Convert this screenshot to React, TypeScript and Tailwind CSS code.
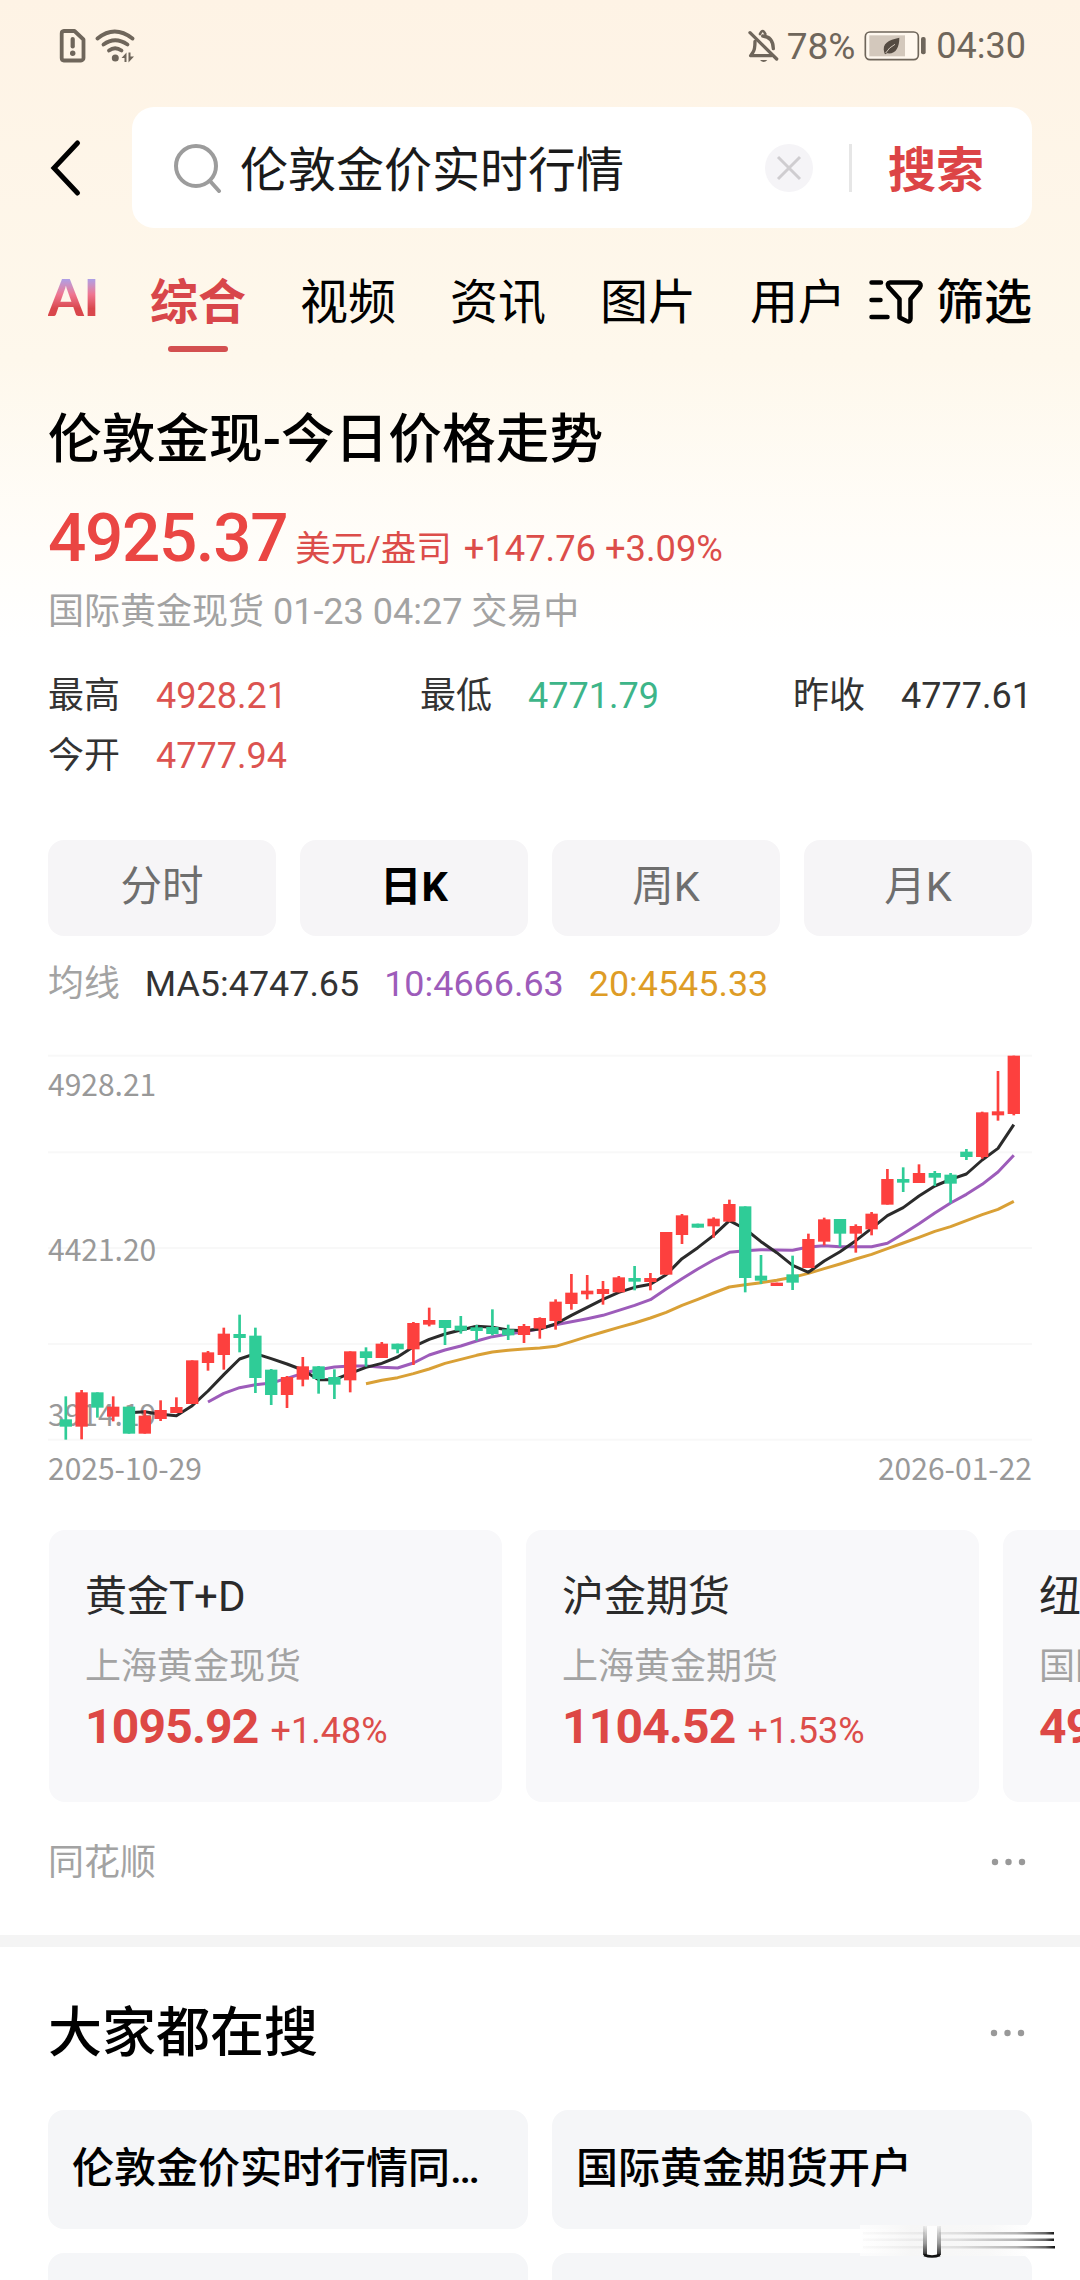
import { clsx } from "clsx";

const FONT = "font-[Roboto,'Noto_Sans_CJK_SC',sans-serif]";
const FONT_CJK = "font-['Noto_Sans_CJK_SC',sans-serif]";

type Candle = [up: 0 | 1, high: number, top: number, bottom: number, low: number];

const CANDLES: Candle[] = [
  [0, 1099, 1168, 1190, 1229],
  [1, 1080, 1087, 1190, 1228],
  [0, 1087, 1087, 1133, 1163],
  [1, 1099, 1130, 1160, 1174],
  [0, 1130, 1130, 1211, 1211],
  [1, 1140, 1157, 1211, 1211],
  [1, 1111, 1140, 1167, 1173],
  [1, 1102, 1131, 1149, 1149],
  [1, 991, 991, 1122, 1122],
  [1, 963, 967, 999, 1022],
  [1, 893, 911, 975, 1019],
  [0, 854, 912, 924, 967],
  [0, 893, 917, 1044, 1089],
  [0, 1017, 1019, 1095, 1125],
  [1, 1038, 1041, 1095, 1134],
  [1, 981, 1009, 1049, 1069],
  [0, 1008, 1009, 1047, 1091],
  [0, 1018, 1041, 1064, 1107],
  [1, 964, 964, 1051, 1087],
  [0, 952, 964, 984, 1010],
  [1, 936, 941, 984, 984],
  [0, 941, 941, 958, 970],
  [1, 876, 879, 958, 1005],
  [1, 833, 870, 884, 889],
  [0, 870, 870, 894, 945],
  [0, 858, 887, 902, 911],
  [0, 885, 892, 903, 932],
  [0, 838, 891, 912, 916],
  [0, 884, 898, 916, 930],
  [1, 882, 888, 915, 939],
  [1, 862, 864, 896, 926],
  [1, 808, 815, 873, 899],
  [1, 732, 788, 822, 839],
  [1, 735, 782, 793, 808],
  [1, 753, 777, 792, 824],
  [1, 738, 742, 787, 787],
  [0, 708, 744, 755, 781],
  [1, 729, 744, 756, 781],
  [1, 606, 606, 734, 734],
  [1, 552, 556, 615, 642],
  [0, 581, 581, 593, 593],
  [1, 562, 566, 589, 623],
  [1, 509, 522, 575, 575],
  [0, 529, 529, 744, 787],
  [0, 675, 737, 752, 762],
  [1, 758, 758, 768, 768],
  [0, 677, 733, 758, 780],
  [1, 611, 627, 714, 714],
  [1, 563, 568, 635, 646],
  [0, 567, 567, 611, 650],
  [1, 583, 588, 611, 668],
  [1, 546, 551, 598, 616],
  [1, 417, 447, 524, 524],
  [0, 412, 447, 458, 486],
  [1, 403, 429, 459, 459],
  [0, 423, 429, 443, 468],
  [0, 429, 434, 461, 520],
  [0, 357, 365, 381, 390],
  [1, 245, 247, 381, 386],
  [1, 123, 244, 256, 272],
  [1, 77, 77, 252, 256],
];

const MA5 = [
  1148, 1145, 1153, 1157, 1127, 1083, 1034, 987, 971, 986, 1002, 1020, 1049, 1049, 1030, 1012, 1000,
  981, 950, 928, 912, 900, 889, 892, 900, 902, 897, 882, 856, 832, 808, 787, 772, 763, 734, 686, 653,
  616, 572, 597, 635, 668, 706, 727, 693, 665, 632, 595, 557, 533, 498, 468, 448, 432, 390, 355, 284,
];

const MA10 = [
  1116, 1090, 1073, 1064, 1059, 1045, 1030, 1019, 1011, 1008, 1008, 1012, 1014, 999, 975, 960, 948,
  933, 920, 912, 905, 896, 884, 875, 866, 856, 841, 826, 809, 777, 746, 717, 690, 667, 662, 659, 660,
  661, 651, 647, 650, 650, 650, 640, 611, 581, 549, 519, 493, 463, 426, 376,
];

const MA20 = [
  1061, 1051, 1043, 1031, 1017, 1000, 988, 976, 966, 961, 957, 954, 949, 935, 920, 906, 892, 879, 864,
  847, 826, 808, 789, 771, 764, 758, 751, 742, 730, 716, 702, 687, 673, 656, 639, 622, 604, 590, 572,
  554, 538, 514,
];

const GRID = [77, 367, 654, 942, 1229];

const candleX = (i: number) => 53.4 + 47.4 * i;

// every average ends on the last candle
function linePoints(values: number[]) {
  const start = CANDLES.length - values.length;
  return values.map((y, i) => `${candleX(start + i)},${y}`).join(" ");
}

function KLineChart() {
  return (
    <div className="relative h-[400px]">
      <svg className="absolute inset-0 h-full w-full" viewBox="0 60 2952 1200">
        {GRID.map((y) => (
          <line key={y} x1="0" x2="2952" y1={y} y2={y} stroke="#f8f8f8" strokeWidth="6" />
        ))}
      </svg>
      <div
        className={clsx(
          "absolute inset-0 flex flex-col pt-[11px] text-[30px] leading-[44px] text-[#999]",
          FONT_CJK
        )}
      >
        <span className="mb-[121px]">4928.21</span>
        <span className="mb-[121px]">4421.20</span>
        <span>3914.19</span>
      </div>
      <svg className="absolute inset-0 h-full w-full" viewBox="0 60 2952 1200">
        <g fill="none" strokeWidth="9" strokeLinejoin="round">
          <polyline points={linePoints(MA20)} stroke="#d9a036" />
          <polyline points={linePoints(MA10)} stroke="#9d5cba" />
          <polyline points={linePoints(MA5)} stroke="#2b2b2b" />
        </g>
        {CANDLES.map(([up, high, top, bottom, low], i) => (
          <g key={i} fill={up ? "#fd403e" : "#2fcc97"}>
            <rect x={candleX(i) - 4} y={high} width="8" height={low - high} />
            <rect x={candleX(i) - 18.5} y={top} width="37" height={bottom - top} />
          </g>
        ))}
      </svg>
    </div>
  );
}

function StatusBar() {
  return (
    <div className="flex h-[92px] items-center justify-between pl-[58px] pr-[54px] text-[#6f665b]">
      <div className="flex items-center gap-[7px]">
        <svg width="30" height="36" viewBox="0 0 30 36" fill="none" stroke="currentColor" strokeWidth="3.8" strokeLinejoin="round">
          <path d="M6 3h10.500l9 8.500V30a2.500 2.500 0 0 1-2.500 2.500H6A2.500 2.500 0 0 1 3.700 30V5.500A2.500 2.500 0 0 1 6 3z" />
          <path d="M14.700 11v7.500" strokeLinecap="round" strokeWidth="4.200" />
          <circle cx="14.700" cy="25.200" r="2.700" fill="currentColor" stroke="none" />
        </svg>
        <svg width="42" height="36" viewBox="0 0 42 36" fill="none" stroke="currentColor" strokeWidth="3.800" strokeLinecap="round">
          <path d="M2.500 10.500Q19.500 -3.500 37.500 10.500" />
          <path d="M8.500 16.500Q20 8 32.500 16.500" />
          <path d="M14 22.500Q20 18 26.500 22.500" />
          <circle cx="20.300" cy="30" r="3.500" fill="currentColor" stroke="none" />
          <path d="M26.500 30l5-5.500v9.500h-2v-4zM33.500 24.500h2v4H39l-5.500 6z" fill="currentColor" stroke="none" />
        </svg>
      </div>
      <div className="flex items-center">
        <svg width="32" height="36" viewBox="36 54 96 108" fill="none" stroke="currentColor" strokeWidth="10" strokeLinecap="round">
          <path d="M57 94C57 112 56 120 51 127L44 137H106" strokeLinejoin="round" />
          <path d="M80 78Q111 80 112 116" />
          <path d="M72 72Q80 54 88 72" strokeWidth="8" />
          <path d="M42 68L122 147" />
          <path d="M72 150H94Q83 162 72 150z" fill="currentColor" stroke="none" />
        </svg>
        <span className="ml-[7px] text-[37px] leading-none">78%</span>
        <svg className="ml-[9px]" width="63" height="32" viewBox="375 60 189 96">
          <rect x="379" y="66" width="159" height="83" rx="14" fill="#fff8ef" stroke="currentColor" strokeWidth="5" />
          <rect x="391" y="76" width="107" height="63" fill="#d3c8bc" />
          <path d="M481 83C481 112 470 134 444 130L438 133L436 128C428 100 448 90 481 83z" fill="#544b42" />
          <path d="M440 129Q450 112 468 103" fill="none" stroke="#d3c8bc" strokeWidth="3" />
          <rect x="546" y="81" width="14" height="52" rx="6" fill="currentColor" />
        </svg>
        <span className="ml-[9px] text-[36px] leading-none">04:30</span>
      </div>
    </div>
  );
}

function SearchBar() {
  return (
    <div className="mt-[15px] flex h-[121px] items-center">
      <svg className="ml-[48px]" width="84" height="60" viewBox="0 0 84 60" fill="none" stroke="#000" strokeWidth="5" strokeLinecap="round">
        <path d="M29.500 5L6 30l23.500 25" />
      </svg>
      <div className="flex h-full w-[900px] items-center rounded-[22px] bg-white">
        <svg className="ml-[41px]" width="50" height="50" viewBox="0 0 50 50" fill="none" stroke="#9c9c9c" strokeWidth="4" strokeLinecap="round">
          <circle cx="23" cy="23" r="20" />
          <path d="M37 38l9 10" />
        </svg>
        <span className={clsx("mb-[3px] ml-[17px] text-[48px] leading-none text-[#1a1a1a]", FONT_CJK)}>
          伦敦金价实时行情
        </span>
        <svg className="ml-[141px]" width="48" height="48" viewBox="0 0 48 48">
          <circle cx="24" cy="24" r="24" fill="#f5f4f7" />
          <path d="M13 13l22 22M35 13L13 35" stroke="#cfcdd0" strokeWidth="3" />
        </svg>
        <div className="ml-[36px] h-[48px] w-[3px] bg-[#e6e6e6]" />
        <span className={clsx("mb-[4px] ml-[36px] text-[48px] font-bold leading-none text-[#dc4446]", FONT_CJK)}>
          搜索
        </span>
      </div>
    </div>
  );
}

function Tabs() {
  return (
    <div className={clsx("flex h-[146px] whitespace-nowrap px-[48px] pt-[35px] text-[48px] leading-[70px]", FONT_CJK)}>
      <span className="h-[70px] w-[102px] shrink-0 bg-gradient-to-b from-[#a9a0ea] from-22% via-[#ef7590] via-45% to-[#d9474c] to-65% bg-clip-text font-[Lato,sans-serif] text-[51px] font-black leading-[68px] text-transparent">
        AI
      </span>
      <div className="flex w-[96px] shrink-0 flex-col items-center font-bold text-[#d8464a]">
        <span>综合</span>
        <span className="mt-[13px] h-[6px] w-[60px] rounded-full bg-[#d35050]" />
      </div>
      <div className="ml-[54px] flex gap-[54px] text-black">
        {["视频", "资讯", "图片", "用户"].map((tab) => (
          <span key={tab}>{tab}</span>
        ))}
      </div>
      <svg className="ml-[21px] mt-[15px] shrink-0" width="58" height="48" viewBox="0 0 58 48" fill="none" stroke="#000" strokeWidth="4.500" strokeLinecap="round" strokeLinejoin="round">
        <path d="M4.500 4.500h9.500M4.500 22h9M4.500 39h16" />
        <path d="M23 4.500h28q4 1 2 5L43.500 21v19.500q0 4-4 2.500l-7-3.500V21L21.500 9q-2-4 1.500-4.500z" />
      </svg>
      <span className="ml-[11px] font-medium text-black">筛选</span>
    </div>
  );
}

const STATS = [
  { label: "最高", value: "4928.21", color: "text-[#dc5350]" },
  { label: "最低", value: "4771.79", color: "text-[#3db589]" },
  { label: "昨收", value: "4777.61", color: "text-[#333]" },
  { label: "今开", value: "4777.94", color: "text-[#dc5350]" },
];

const PERIODS = ["分时", "日K", "周K", "月K"];

const PRODUCTS = [
  { name: "黄金T+D", market: "上海黄金现货", price: "1095.92", change: "+1.48%" },
  { name: "沪金期货", market: "上海黄金期货", price: "1104.52", change: "+1.53%" },
  { name: "纽约金", market: "国际黄金期货", price: "4936.30", change: "+3.08%" },
];

function More() {
  return (
    <svg width="42" height="12" viewBox="0 0 42 12" fill="#999">
      <circle cx="4" cy="5" r="3.200" />
      <circle cx="17.500" cy="5" r="3.200" />
      <circle cx="31" cy="5" r="3.200" />
    </svg>
  );
}

function QuoteCard() {
  return (
    <section>
      <div className="px-[48px]">
        <h1 className="pt-[26px] text-[53.700px] font-medium leading-[80px] text-black">伦敦金现-今日价格走势</h1>
        <div className="mt-[18px] flex items-baseline leading-[80px] text-[#dc4d4a]">
          <span className="text-[67.500px] font-medium tracking-[-1.400px] text-[#ea4643]">4925.37</span>
          <span className="ml-[8px] text-[35.500px]">美元/盎司</span>
          <span className="ml-[12px] text-[36.300px]">+147.76 +3.09%</span>
        </div>
        <p className="-mt-[3px] text-[36px] leading-[52px] text-[#a3a3a3]">国际黄金现货 01-23 04:27 交易中</p>
        <div className="mt-[28px] grid grid-cols-[372px_373px_auto] text-[36px] leading-[60px] text-[#333]">
          {STATS.map((s) => (
            <div key={s.label} className="flex gap-[36px]">
              <span>{s.label}</span>
              <span className={s.color}>{s.value}</span>
            </div>
          ))}
        </div>
        <div className="mt-[54px] flex gap-[24px]">
          {PERIODS.map((p) => (
            <button
              key={p}
              className={clsx(
                "h-[96px] w-[228px] rounded-[16px] bg-[#f6f5f7] pb-[2px] text-[41.500px] leading-none",
                p === "日K" ? "font-bold text-black" : "text-[#6e6e6e]"
              )}
            >
              {p}
            </button>
          ))}
        </div>
        <div className="mt-[20px] flex gap-[25px] text-[35.900px] leading-[56px]">
          <span className="text-[#a3a3a3]">均线</span>
          <span className="text-[#333]">MA5:4747.65</span>
          <span className="text-[#9d5cba]">10:4666.63</span>
          <span className="text-[#de9c26]">20:4545.33</span>
        </div>
        <div className="mt-[38px]">
          <KLineChart />
        </div>
        <div className={clsx("-mt-[3px] flex justify-between text-[30px] leading-[40px] text-[#999]", FONT_CJK)}>
          <span>2025-10-29</span>
          <span>2026-01-22</span>
        </div>
      </div>
      <div className="mt-[43px] flex gap-[24px] overflow-hidden pl-[49px]">
        {PRODUCTS.map((p) => (
          <div key={p.name} className="h-[272px] w-[453px] shrink-0 rounded-[16px] bg-[#f8f8fa] px-[36px] pt-[36px]">
            <div className="text-[42px] leading-[62px] text-[#2b2b2b]">{p.name}</div>
            <div className="mt-[13px] text-[36px] leading-[52px] text-[#a3a3a3]">{p.market}</div>
            <div className="mt-[2px] flex items-baseline leading-[64px] text-[#dc4d4a]">
              <span className="text-[48px] font-bold tracking-[-0.8px] text-[#dd4845]">{p.price}</span>
              <span className="ml-[12px] text-[36px]">{p.change}</span>
            </div>
          </div>
        ))}
      </div>
      <div className="flex h-[133px] items-center justify-between pb-[12px] pl-[48px] pr-[47px] text-[36px] text-[#a3a3a3]">
        <span>同花顺</span>
        <More />
      </div>
    </section>
  );
}

// smeared corner mark lying over the lower right search card
function CornerMark() {
  return (
    <svg className="absolute left-[857px] top-[277px]" width="200" height="36" viewBox="0 0 200 36">
      <defs>
        <linearGradient id="haze" x1="0" x2="1" y1="0" y2="0">
          <stop offset="0" stopColor="#fff" stopOpacity="0.7" />
          <stop offset="0.3" stopColor="#f6f6f6" />
          <stop offset="0.75" stopColor="#f8f8f8" />
          <stop offset="1" stopColor="#fff" />
        </linearGradient>
        <linearGradient id="streak" gradientUnits="userSpaceOnUse" x1="6" x2="198" y1="0" y2="0">
          <stop offset="0" stopColor="#eee" stopOpacity="0.3" />
          <stop offset="0.5" stopColor="#dedede" />
          <stop offset="0.8" stopColor="#b5b5b5" />
          <stop offset="0.95" stopColor="#666" />
          <stop offset="1" stopColor="#111" />
        </linearGradient>
        <linearGradient id="stem" x1="0" x2="0" y1="0" y2="1">
          <stop offset="0" stopColor="#999" stopOpacity="0.15" />
          <stop offset="0.6" stopColor="#999" />
          <stop offset="1" stopColor="#333" />
        </linearGradient>
      </defs>
      <rect x="3" y="1" width="170" height="31" fill="url(#haze)" />
      <g fill="url(#streak)">
        <rect x="6" y="8" width="191" height="2.500" />
        <rect x="6" y="14.500" width="191" height="2.500" />
        <rect x="6" y="22" width="192" height="2.500" />
      </g>
      <rect x="68" y="2" width="14" height="30" fill="#fdfdfd" />
      <rect x="66" y="2" width="4" height="29" fill="url(#stem)" />
      <rect x="80" y="2" width="4" height="29" fill="url(#stem)" />
      <path d="M67 31q8 3 16 0" fill="none" stroke="#111" strokeWidth="2.500" />
    </svg>
  );
}

function HotSearches() {
  return (
    <section className="relative border-t-[12px] border-[#f4f4f4]">
      <div className="flex h-[163px] items-center justify-between px-[48px] pt-[10px] text-[54px] font-medium text-black">
        <h2 className={clsx("pb-[11px]", FONT_CJK)}>大家都在搜</h2>
        <More />
      </div>
      <div className="grid grid-cols-2 gap-[24px] px-[48px] text-[42px] font-medium text-black">
        {["伦敦金价实时行情同花顺", "国际黄金期货开户", "", ""].map((q, i) => (
          <div key={i} className="flex h-[119px] items-center rounded-[16px] bg-[#f5f6f8] px-[24px] pb-[2px]">
            <span className="truncate">{q}</span>
          </div>
        ))}
      </div>
      <CornerMark />
    </section>
  );
}

export default function App() {
  return (
    <div
      className={clsx(
        "h-[2280px] w-[1080px] overflow-hidden bg-white bg-[linear-gradient(180deg,#fef3e5_0px,#fef8ec_360px,#fffdf9_540px,#ffffff_640px)]",
        FONT
      )}
    >
      <StatusBar />
      <SearchBar />
      <Tabs />
      <QuoteCard />
      <HotSearches />
    </div>
  );
}
